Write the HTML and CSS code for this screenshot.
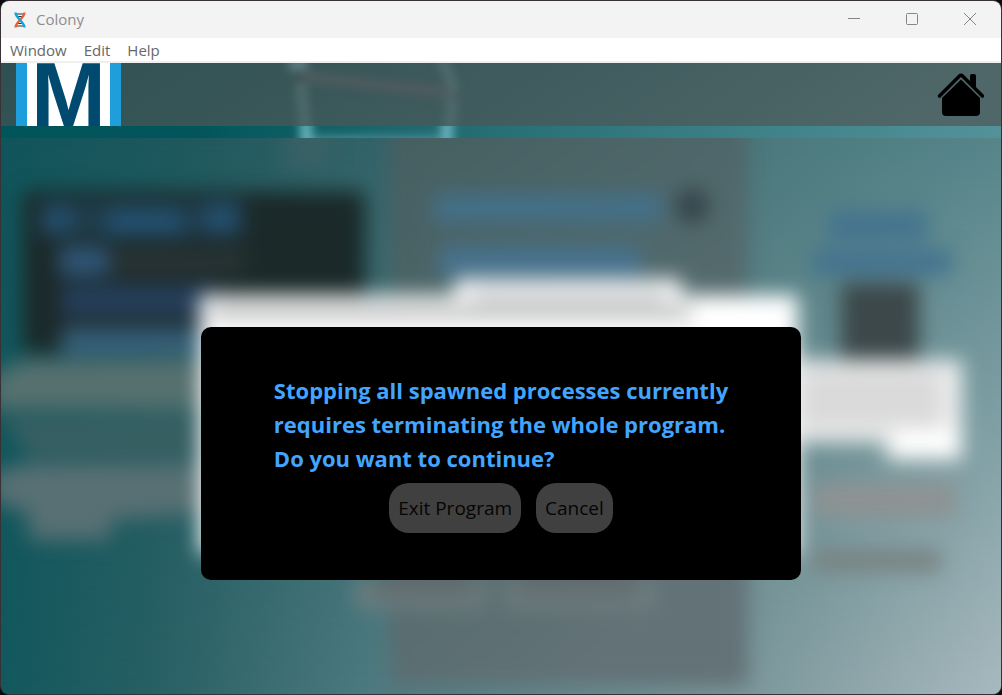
FILE: index.html
```html
<!DOCTYPE html>
<html lang="en">
<head>
<meta charset="utf-8">
<meta name="viewport" content="width=device-width, initial-scale=1">
<title>Colony</title>
<link rel="stylesheet" href="styles.css">
</head>
<body>
<div class="window">
  <div class="titlebar">
    <svg class="app-icon" viewBox="0 0 14 16" aria-hidden="true">
      <path d="M2 2h10M3 4.500h8M3 11.500h8M2 14h10" stroke="#333" stroke-width="1"/>
      <path d="M11.500 0.500C11.500 6 2.500 10 2.500 15.500" fill="none" stroke="#f05a28" stroke-width="2.200"/>
      <path d="M2.500 0.500C2.500 6 11.500 10 11.500 15.500" fill="none" stroke="#08a8dc" stroke-width="2.400"/>
    </svg>
    <span class="title">Colony</span>
    <div class="controls">
      <button class="control" aria-label="Minimize"><svg viewBox="0 0 14 14"><path d="M1 6.5h12"/></svg></button>
      <button class="control" aria-label="Maximize"><svg viewBox="0 0 14 14"><rect x="1.5" y="1.5" width="11" height="11" rx="1"/></svg></button>
      <button class="control" aria-label="Close"><svg viewBox="0 0 14 14"><path d="M1 1l12 12M13 1L1 13"/></svg></button>
    </div>
  </div>
  <nav class="menubar">
    <button class="menu">Window</button>
    <button class="menu">Edit</button>
    <button class="menu">Help</button>
  </nav>
  <header class="header">
    <svg class="header-art" viewBox="0 0 1000 75" preserveAspectRatio="none" aria-hidden="true">
      <defs>
        <linearGradient id="bar" x2="1" y2="0.1">
          <stop offset="0" stop-color="#2f5052"/><stop offset=".4" stop-color="#3b585a"/><stop offset="1" stop-color="#4f6769"/>
        </linearGradient>
        <linearGradient id="strip">
          <stop offset="0" stop-color="#00555a"/><stop offset=".2" stop-color="#02565b"/><stop offset=".5" stop-color="#277075"/><stop offset="1" stop-color="#54929a"/>
        </linearGradient>
        <filter id="soft" x="-20%" y="-50%" width="140%" height="200%" color-interpolation-filters="sRGB"><feGaussianBlur stdDeviation="5"/></filter>
        <clipPath id="upper"><rect width="1000" height="63"/></clipPath>
        <clipPath id="lower"><rect y="63" width="1000" height="12"/></clipPath>
      </defs>
      <rect width="1000" height="63" fill="url(#bar)"/>
      <rect y="63" width="1000" height="12" fill="url(#strip)"/>
      <g clip-path="url(#upper)">
        <g filter="url(#soft)" fill="none" stroke-width="11">
          <path d="M297 13L452 30" stroke="#4f5b5f"/>
          <path d="M299 12L306 80M440 -5L453 25L447 80" stroke="#506a6d"/>
          <path d="M288 1H306" stroke="#5d7d80" stroke-width="13"/>
          <circle cx="299" cy="15" r="5" fill="#3d4d4b" stroke="none"/>
          <circle cx="457" cy="33" r="5" fill="#46575a" stroke="none"/>
        </g>
      </g>
      <g clip-path="url(#lower)">
        <g filter="url(#soft)">
          <path d="M300 73H450V84H300Z" fill="#4c8b98"/>
          <path d="M299 54H311V84H299ZM440 54H452V84H440Z" fill="#64b0bc"/>
        </g>
      </g>
    </svg>
    <a class="logo" href="#" aria-label="IMI"><span class="logo-bar"></span><span class="logo-letter">M</span><span class="logo-bar"></span></a>
    <a class="home" href="#" aria-label="Home">
      <svg viewBox="0 0 48 46">
        <path d="M33 4Q33 2 35 2H37Q39 2 39 4V19L33 13Z"/>
        <path d="M2.5 24L22.5 4Q24 2.5 25.500 4L45.500 24" fill="none" stroke="#000" stroke-width="3.500" stroke-linecap="round"/>
        <path d="M24 7.500L43 26V40Q43 44 39 44H9Q5 44 5 40V26Z"/>
      </svg>
    </a>
  </header>
  <main class="stage">
    <svg class="backdrop" viewBox="0 0 1000 556" preserveAspectRatio="none" aria-hidden="true">
      <defs>
        <linearGradient id="base" x2="1" y2="0">
          <stop offset="0" stop-color="#10555b"/><stop offset=".2" stop-color="#20595e"/><stop offset=".38" stop-color="#336469"/><stop offset=".75" stop-color="#4a787c"/><stop offset="1" stop-color="#56858a"/>
        </linearGradient>
        <linearGradient id="low" x2="1" y2="0">
          <stop offset="0" stop-color="#12585d"/><stop offset=".15" stop-color="#275f64"/><stop offset=".37" stop-color="#4d7a80"/><stop offset=".76" stop-color="#7e999d"/><stop offset="1" stop-color="#a8b9be"/>
        </linearGradient>
        <linearGradient id="fade" x2="0" y2="1"><stop offset="0" stop-color="#000"/><stop offset=".2" stop-color="#333"/><stop offset="1" stop-color="#fff"/></linearGradient>
        <linearGradient id="panel" x2=".5" y2="1"><stop offset="0" stop-color="#445e60"/><stop offset=".5" stop-color="#50686b"/><stop offset="1" stop-color="#637277"/></linearGradient>
        <mask id="down"><rect width="1000" height="556" fill="url(#fade)"/></mask>
        <filter id="blur" filterUnits="userSpaceOnUse" x="-60" y="-60" width="1120" height="680" color-interpolation-filters="sRGB"><feGaussianBlur stdDeviation="10"/></filter>
      </defs>
      <rect width="1000" height="556" fill="url(#base)"/>
      <rect width="1000" height="556" fill="url(#low)" mask="url(#down)"/>
      <g filter="url(#blur)">
        <rect x="388" y="-40" width="359" height="588" fill="url(#panel)"/>
        <path d="M285 -30H330V30H285Z" fill="#426266" opacity=".6"/>
        <rect x="22" y="53" width="342" height="162" rx="8" fill="#1b2929"/>
        <path d="M40 63H240V99H40Z" fill="#1f3c4a"/>
        <path d="M40 69H72V94H40ZM105 71H182V98H105ZM203 65H240V94H203Z" fill="#23506f"/>
        <path d="M58 109H108V137H58Z" fill="#30577a"/>
        <path d="M110 112H245V135H110Z" fill="#293434"/>
        <path d="M60 147H215V178H60Z" fill="#253f5b"/>
        <path d="M60 190H215V215H60Z" fill="#375f7a"/>
        <path d="M22 222H205V272H-10V238Z" fill="#56706f"/>
        <path d="M0 280H205V320H30Z" fill="#375f62"/>
        <path d="M25 326H210V374L110 382V402H28V376L-10 362V335Z" fill="#587074"/>
        <path d="M432 56H662V84H432Z" fill="#437089"/>
        <path d="M438 108H640V138H438Z" fill="#46728d"/>
        <circle cx="691" cy="68" r="17" fill="#35444a"/>
        <path d="M828 73H926V102H828ZM812 111H950V137H812Z" fill="#43738f"/>
        <rect x="840" y="145" width="78" height="78" fill="#3c484a"/>
        <path d="M199 157H454V141H680V157H797V416H199Z" fill="#ffffff"/>
        <path d="M210 166H690V182H210Z" fill="#c4c4c4"/>
        <path d="M470 148H665V166H470Z" fill="#d9dcdd"/>
        <path d="M785 222H961V322H885V304H785Z" fill="#eeeeee"/>
        <path d="M800 232H940V290H800Z" fill="#dadada"/>
        <path d="M892 290H958V318H892Z" fill="#ffffff"/>
        <path d="M812 345H955V379H812Z" fill="#8e9293"/>
        <path d="M812 411H940V434H812Z" fill="#788383"/>
        <path d="M355 442H485V470H355ZM505 442H653V470H505Z" fill="#708081"/>
        <path d="M370 442H475V459H370ZM515 442H638V459H515Z" fill="#626b6d"/>
      </g>
    </svg>
    <section class="dialog" role="alertdialog" aria-modal="true" aria-labelledby="message">
      <h2 class="message" id="message">Stopping all spawned processes currently<br>requires terminating the whole program.<br>Do you want to continue?</h2>
      <div class="actions">
        <button class="action">Exit Program</button>
        <button class="action">Cancel</button>
      </div>
    </section>
  </main>
</div>
</body>
</html>
```
FILE: styles.css
```css
* { box-sizing: border-box; }
body {
  margin: 0;
  background: #0d0a0d;
  font-family: "Open Sans", "Noto Sans", sans-serif;
}
button {
  border: 0;
  margin: 0;
  background: none;
  font: inherit;
  color: inherit;
}
.window {
  min-height: 100vh;
  display: flex;
  flex-direction: column;
  border: 1px solid #383236;
  border-radius: 9px;
  overflow: hidden;
}
.titlebar {
  display: flex;
  align-items: center;
  height: 37px;
  padding: 0 2px 0 12px;
  background: #f3f3f3;
  color: #8d8d8d;
  font-size: 15px;
  line-height: 20px;
}
.title { padding-bottom: 2px; }
.app-icon { width: 14px; height: 16px; margin-right: 9px; }
.controls {
  display: flex;
  align-self: stretch;
  margin-left: auto;
}
.control {
  display: flex;
  align-items: center;
  justify-content: center;
  width: 58px;
  padding: 0 0 1px;
}
.control svg {
  width: 14px;
  height: 14px;
  fill: none;
  stroke: #858585;
}
.menubar {
  display: flex;
  align-items: center;
  gap: 17px;
  height: 25px;
  padding: 0 9px;
  background: #fff;
  border-bottom: 2px solid #efefef;
  color: #686868;
  font-size: 15px;
}
.menu { padding: 0; line-height: 20px; }
.header {
  position: relative;
  display: flex;
  justify-content: space-between;
  height: 75px;
  padding: 0 16px 12px 15px;
}
.header-art, .backdrop {
  position: absolute;
  inset: 0;
  width: 100%;
  height: 100%;
}
.logo {
  position: relative;
  display: flex;
  justify-content: space-between;
  width: 105px;
  height: 63px;
  overflow: hidden;
  background: #fff;
  color: #004a70;
  text-decoration: none;
}
.logo-bar { width: 11px; background: #1f9edc; }
.logo-letter {
  font: bold 90px/64px "Liberation Sans", sans-serif;
}
.home {
  position: relative;
  align-self: center;
  height: 46px;
}
.home svg { display: block; width: 48px; height: 46px; }
.stage {
  position: relative;
  flex: 1;
  display: flex;
  align-items: flex-start;
  justify-content: center;
  padding: 189px 16px 16px;
}
.dialog {
  position: relative;
  display: flex;
  flex-direction: column;
  align-items: center;
  gap: 8px;
  width: 600px;
  max-width: 100%;
  padding: 46px 24px 47px;
  border-radius: 10px;
  background: #000;
}
.message {
  margin: 0;
  color: #42a5ff;
  font-size: 22px;
  font-weight: 700;
  line-height: 34px;
}
.actions { display: flex; gap: 15px; }
.action {
  height: 50px;
  padding: 0 9px;
  border-radius: 20px;
  background: #404040;
  color: #050505;
  font-size: 19px;
}
```
